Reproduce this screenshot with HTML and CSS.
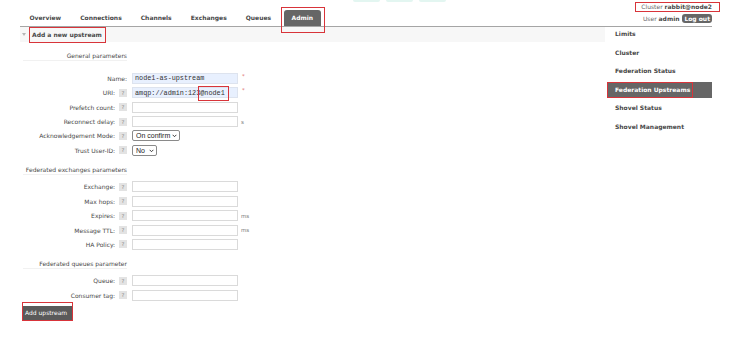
FILE: index.html
```html
<!DOCTYPE html>
<html>
	<head>
		<meta charset="UTF-8">
		<title>RabbitMQ Management</title>
		<link rel="stylesheet" href="styles.css">
	</head>
	<body>
		<div class="logo-strip"><span></span><span></span><span></span></div>
		<div class="page">

			<div class="top">
				<ul class="tabs">
					<li>Overview</li>
					<li>Connections</li>
					<li>Channels</li>
					<li>Exchanges</li>
					<li>Queues</li>
					<li class="active marked marked-tab">Admin</li>
				</ul>
				<div class="user-info">
					<div class="cluster marked marked-cluster">Cluster <b>rabbit@node2</b></div>
					<div class="user">User <b>admin</b> <button class="logout">Log out</button></div>
				</div>
			</div>

			<div class="main">
				<div class="content">
					<div class="section-head">
						<span class="arrow"></span>
						<h2 class="marked marked-head">Add a new upstream</h2>
					</div>

					<h3 class="group-title">General parameters</h3>
					<div class="fields fields-first">
						<div class="row">
							<label>Name:</label>
							<input class="field filled" type="text" value="node1-as-upstream">
							<span class="unit req">*</span>
						</div>
						<div class="row">
							<label>URI: <span class="help">?</span></label>
							<span class="field-wrap">
								<input class="field filled" type="text" value="amqp://admin:123@node1">
								<span class="uri-mark"></span>
							</span>
							<span class="unit req">*</span>
						</div>
						<div class="row">
							<label>Prefetch count: <span class="help">?</span></label>
							<input class="field" type="text">
						</div>
						<div class="row">
							<label>Reconnect delay: <span class="help">?</span></label>
							<input class="field" type="text">
							<span class="unit">s</span>
						</div>
						<div class="row">
							<label>Acknowledgement Mode: <span class="help">?</span></label>
							<span class="select-box select-wide">
								<select class="select">
									<option selected>On confirm</option>
									<option>On publish</option>
									<option>No ack</option>
								</select>
								<svg class="chevron" viewBox="0 0 8 5"><path d="M1 1l3 3 3-3" fill="none" stroke="#222" stroke-width="1.4"/></svg>
							</span>
						</div>
						<div class="row">
							<label>Trust User-ID: <span class="help">?</span></label>
							<span class="select-box select-narrow">
								<select class="select">
									<option selected>No</option>
									<option>Yes</option>
								</select>
								<svg class="chevron" viewBox="0 0 8 5"><path d="M1 1l3 3 3-3" fill="none" stroke="#222" stroke-width="1.4"/></svg>
							</span>
						</div>
					</div>

					<h3 class="group-title">Federated exchanges parameters</h3>
					<div class="fields">
						<div class="row">
							<label>Exchange: <span class="help">?</span></label>
							<input class="field" type="text">
						</div>
						<div class="row">
							<label>Max hops: <span class="help">?</span></label>
							<input class="field" type="text">
						</div>
						<div class="row">
							<label>Expires: <span class="help">?</span></label>
							<input class="field" type="text">
							<span class="unit">ms</span>
						</div>
						<div class="row">
							<label>Message TTL: <span class="help">?</span></label>
							<input class="field" type="text">
							<span class="unit">ms</span>
						</div>
						<div class="row">
							<label>HA Policy: <span class="help">?</span></label>
							<input class="field" type="text">
						</div>
					</div>

					<h3 class="group-title">Federated queues parameter</h3>
					<div class="fields">
						<div class="row">
							<label>Queue: <span class="help">?</span></label>
							<input class="field" type="text">
						</div>
						<div class="row">
							<label>Consumer tag: <span class="help">?</span></label>
							<input class="field" type="text">
						</div>
					</div>

					<div class="submit-wrap">
						<button class="submit">Add upstream</button>
					</div>
				</div>

				<ul class="sidebar">
					<li>Limits</li>
					<li>Cluster</li>
					<li>Federation Status</li>
					<li class="active marked marked-side">Federation Upstreams</li>
					<li>Shovel Status</li>
					<li>Shovel Management</li>
				</ul>
			</div>
		</div>
	</body>
</html>
```

FILE: styles.css
```css
* {
	box-sizing: border-box;
}
body {
	margin: 0;
	background: #fff;
	color: #484848;
	font-family: "DejaVu Sans", Verdana, sans-serif;
	font-size: 6px;
	position: relative;
}
.logo-strip {
	position: absolute;
	top: 0;
	left: 353px;
	display: flex;
	gap: 6px;
}
.logo-strip span {
	display: block;
	width: 27px;
	height: 2px;
	background: #e3f6f1;
	border-radius: 0 0 2px 2px;
}
.page {
	padding: 0 20px;
}

/* red annotation boxes */
.marked {
	position: relative;
}
.marked::after {
	content: "";
	position: absolute;
	border: 1px solid #d8343a;
	pointer-events: none;
}
.marked-tab::after {
	left: -3px;
	right: -4px;
	top: -3px;
	bottom: -7px;
}
.marked-cluster::after {
	left: -6px;
	right: -8px;
	top: -1px;
	bottom: -1px;
}
.marked-head::after {
	left: -3px;
	right: -4px;
	top: -4px;
	bottom: -4px;
}
.marked-side::after {
	left: -1px;
	right: 19px;
	top: 0;
	bottom: 0;
}

/* header */
.top {
	display: flex;
	justify-content: space-between;
	align-items: flex-end;
	height: 27px;
	border-bottom: 1px solid #a5a5a5;
}
.tabs {
	display: flex;
	list-style: none;
	margin: 0;
	padding: 0;
}
.tabs li {
	padding: 0 9.5px;
	height: 16px;
	line-height: 16px;
	font-weight: bold;
}
.tabs li.active {
	background: #666;
	color: #fff;
	border-radius: 3px 3px 0 0;
	margin-left: 3px;
	padding: 0 8px;
}
.user-info {
	align-self: flex-start;
	text-align: right;
	padding-top: 3px;
}
.cluster {
	display: inline-block;
	line-height: 8px;
	color: #666;
}
.cluster b,
.user b {
	color: #484848;
}
.user {
	margin-top: 3px;
	line-height: 9px;
	color: #666;
}
.logout {
	font: bold 6px "DejaVu Sans", Verdana, sans-serif;
	background: #666;
	color: #fff;
	border: none;
	border-radius: 3px;
	height: 9px;
	padding: 0 2px;
	margin-left: 1px;
	vertical-align: top;
}

/* main */
.main {
	display: flex;
}
.content {
	width: 585px;
}
.section-head {
	display: flex;
	align-items: center;
	height: 15px;
	background: #f7f7f7;
	padding-left: 2px;
}
.arrow {
	width: 0;
	height: 0;
	border-left: 2.5px solid transparent;
	border-right: 2.5px solid transparent;
	border-top: 3px solid #b5b5b5;
	margin-right: 6px;
}
.section-head h2 {
	margin: 0;
	font-size: 6px;
	font-weight: bold;
	line-height: 8px;
}
.group-title {
	margin: 10px 0 6.5px 3px;
	width: 104px;
	text-align: right;
	font-size: 6px;
	font-weight: normal;
	line-height: 8px;
	border-bottom: 1px solid #f1f1f1;
}
.fields-first {
	padding-top: 2px;
}
.row {
	display: flex;
	align-items: center;
	height: 11px;
	margin-top: 3.4px;
}
.row label {
	width: 107px;
	display: flex;
	justify-content: flex-end;
	align-items: center;
	gap: 2px;
	white-space: pre;
}
.help {
	display: inline-block;
	width: 8px;
	height: 8px;
	line-height: 8px;
	text-align: center;
	background: #e3e3e3;
	color: #8a8a8a;
	font-size: 5.5px;
}
.field {
	margin: 0 0 0 5px;
	width: 106px;
	height: 11px;
	border: 1px solid #dadada;
	padding: 0 2px;
	font-family: "Liberation Mono", monospace;
	font-size: 6.8px;
	color: #333;
	background: #fff;
}
.field.filled {
	background: #e8f0fe;
	border-color: #dde3ee;
}
.field-wrap {
	position: relative;
	display: flex;
}
.uri-mark {
	position: absolute;
	left: 71px;
	top: -1px;
	width: 31px;
	height: 15px;
	border: 1px solid #d8343a;
}
.unit {
	margin-left: 3px;
	color: #777;
	font-size: 5.5px;
}
.req {
	color: #e07070;
	align-self: flex-start;
	margin-left: 4px;
}
.select-box {
	position: relative;
	display: block;
	margin-left: 5px;
	height: 11px;
}
.select-wide {
	width: 48px;
}
.select-narrow {
	width: 25px;
}
.select {
	appearance: none;
	-webkit-appearance: none;
	display: block;
	width: 100%;
	height: 11px;
	padding: 0 0 0 3px;
	font-family: "Liberation Sans", Arial, sans-serif;
	font-size: 7px;
	line-height: 9px;
	color: #222;
	border: 1px solid #8a8a8a;
	border-radius: 2px;
	background: #fff;
}
.chevron {
	position: absolute;
	right: 3px;
	top: 4px;
	width: 5px;
	height: 3.5px;
	pointer-events: none;
}
.submit-wrap {
	margin: 1px 0 0 2px;
	width: 51px;
	height: 19px;
	border: 1px solid #d8343a;
	padding-top: 3px;
}
.submit {
	display: block;
	width: 49px;
	height: 14px;
	border: none;
	background: #5a5a5a;
	color: #fff;
	font: 6px "DejaVu Sans", Verdana, sans-serif;
	padding: 0 2px;
	text-align: left;
}

/* sidebar */
.sidebar {
	list-style: none;
	flex: 1;
	margin: -1px 0 0;
	padding: 0 0 0 3px;
	display: flex;
	flex-direction: column;
	gap: 2.6px;
}
.sidebar li {
	height: 16px;
	line-height: 16px;
	padding-left: 7px;
	font-weight: bold;
}
.sidebar li.active {
	background: #666;
	color: #fff;
}
```
